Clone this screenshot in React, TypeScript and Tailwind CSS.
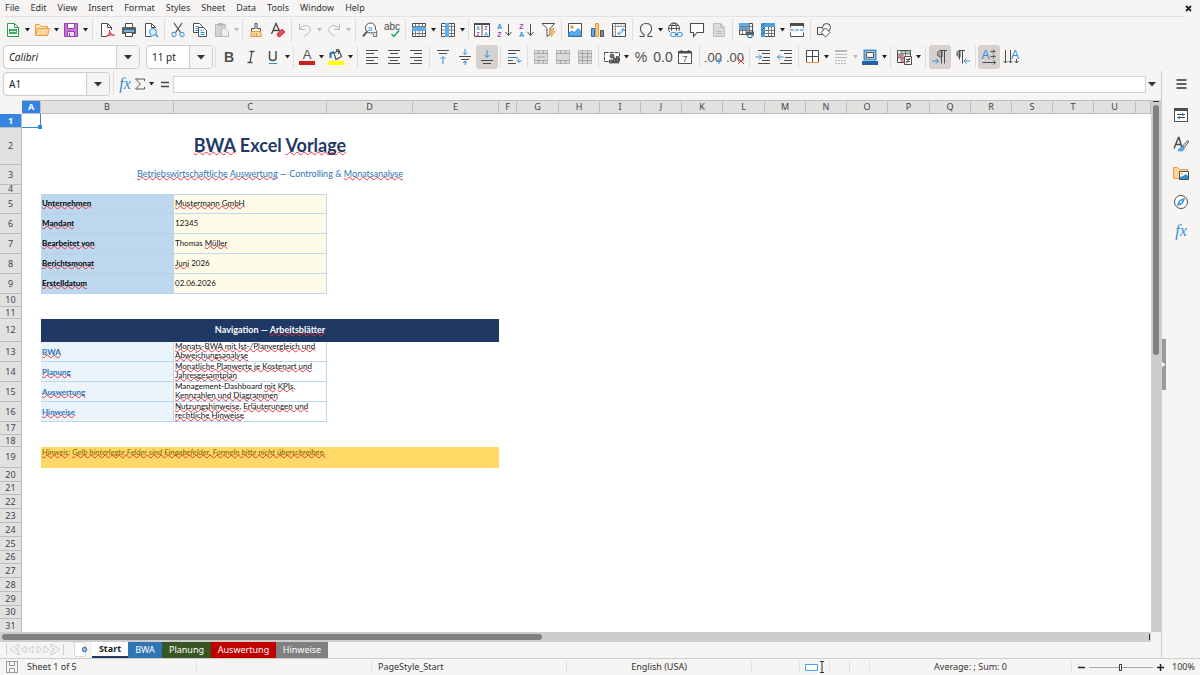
import { useState } from 'react';
import type { ReactNode } from 'react';
import clsx from 'clsx';

const INK = '#4d4d4d';
const GRID = '#7a7a7a';
const BLUE = '#2f8fd8';
const PURPLE = '#a03fb5';
const DIM = '#b9b9b7';
const ORANGE = '#ed9a3c';

/* ── Icon helpers ── */

function Svg({ children, dim }: { children: ReactNode; dim?: boolean }) {
    return (
        <svg
            width="16" height="16" viewBox="0 0 16 16" fill="none"
            stroke={dim ? DIM : INK} strokeWidth="1" aria-hidden="true"
            className="block shrink-0 overflow-visible"
        >
            {children}
        </svg>
    );
}

function Glyph({ x, y, size, fill = INK, bold, children }: { x: number; y: number; size: number; fill?: string; bold?: boolean; children: ReactNode }) {
    return (
        <text
            x={x} y={y} fontSize={size} fill={fill} stroke="none" textAnchor="middle"
            fontWeight={bold ? 700 : 400} fontFamily='"Liberation Sans", sans-serif'
        >
            {children}
        </text>
    );
}

const icons: Record<string, ReactNode> = {
    new: <Svg><path d="M2.5 1.5h7l4 4v9h-11z" fill="#fff" stroke="#2a9d55" /><path d="M9.5 1.5v4h4" stroke="#2a9d55" /><path d="M4 7h8v5H4z" fill="#3fae67" stroke="none" /><path d="M5 9.5h6" stroke="#d9f2e0" /></Svg>,
    open: <Svg><path d="M1.5 13.5v-11h4l2 2h6v2" fill="#fbe3bf" stroke={ORANGE} /><path d="M1.5 13.5l2-7h12l-2 7z" fill="#fcd59b" stroke={ORANGE} /></Svg>,
    save: <Svg><path d="M1.5 1.5h13v13h-13z" fill="#c579d3" stroke="#9b3fae" /><path d="M4.5 1.5h7v5h-7z" fill="#fff" stroke="#9b3fae" /><path d="M4.5 9.5h7v5h-7z" fill="#f2dcf5" stroke="#9b3fae" /><path d="M6.5 11v3" stroke="#9b3fae" /></Svg>,
    pdf: <Svg><path d="M12.5 8V5.5l-4-4h-6v13H8" fill="#fff" /><path d="M8.5 1.5v4h4" /><path d="M7 14.5c3-1 4-4 3.500-6.500 1 4 3 5.500 5 5.200-3-.9-6 0-8.500 1.300z" stroke="#d93644" fill="#f08b94" /></Svg>,
    print: <Svg><path d="M4.500 5V1.500h7V5" fill="#fff" /><rect x="1" y="5" width="14" height="7" rx="1" fill="#5a5f63" stroke="none" /><rect x="3" y="8" width="10" height="2" fill="#6db6ea" stroke="none" /><path d="M4.500 10.500h7v4h-7z" fill="#fff" /></Svg>,
    preview: <Svg><path d="M12.500 6V5.500l-4-4h-6v13h6" fill="#fff" /><path d="M8.500 1.500v4h4" /><circle cx="10" cy="10" r="3.500" stroke={BLUE} fill="#dcefff" /><path d="M12.500 12.500l2.500 2.500" stroke={BLUE} strokeWidth="1.500" /></Svg>,
    cut: <Svg><path d="M4 1l6.500 9.500M12 1L5.500 10.500" strokeWidth="1.200" /><circle cx="4" cy="12.500" r="2.200" stroke={BLUE} /><circle cx="12" cy="12.500" r="2.200" stroke={BLUE} /></Svg>,
    copy: <Svg><path d="M1.500 1.500h6l3 3v6h-9z" fill="#fff" /><path d="M3.500 4.500h3M3.500 6.500h3M3.500 8.500h3" stroke={BLUE} /><path d="M6.500 5.500h5l3 3v6h-8z" fill="#fff" /><path d="M8.500 8.500h2M8.500 10.500h4M8.500 12.500h4" stroke={BLUE} /></Svg>,
    paste: <Svg dim><path d="M1.500 2.500h10v12h-10z" fill="#d4d3d2" /><path d="M4 1h5v3H4z" fill={DIM} stroke="none" /><path d="M7.500 6.500h4l3 3v5h-7z" fill="#f0efee" /></Svg>,
    clone: <Svg><path d="M7 1.500h2v5h3.500v3h-9v-3H7z" fill="#f6f5f4" /><path d="M3.500 9.500h9l1 5h-11z" fill="#fbd7a4" stroke={ORANGE} /><path d="M6 11v3M8.500 11v3" stroke={ORANGE} /></Svg>,
    clear: <Svg><path d="M1.500 12L6 1.500 10 10M3 8.500h6" strokeWidth="1.400" /><path d="M7 12l5-5 3 3-5 4.500H8z" fill="#e0525d" stroke="#d93644" /></Svg>,
    undo: <Svg dim><path d="M2.500 2v5.500H8M2.500 7.500c3-5 9-5 10.500-1 1 3.500-2 5-6 8" /></Svg>,
    redo: <Svg dim><path d="M13.500 2v5.500H8M13.500 7.500c-3-5-9-5-10.500-1-1 3.500 2 5 6 8" /></Svg>,
    find: <Svg><circle cx="8.500" cy="6" r="5" fill="#fff" /><path d="M5 9.500L1 14.500" strokeWidth="2" /><Glyph x={8} y={8.500} size={8} fill={BLUE}>a</Glyph><path d="M11 8h5v8h-5z" fill="#f6f5f4" stroke="none" /><Glyph x={13} y={15} size={9}>d</Glyph></Svg>,
    spell: <Svg><Glyph x={8} y={8} size={10}>abc</Glyph><path d="M7.500 12l2.500 2.500 5-6" stroke="#18a558" strokeWidth="1.400" /></Svg>,
    row: <Svg><path d="M1.500 1.500h13v13h-13z" fill="#fff" /><path d="M4.500 2v12M8 2v12M11.500 2v12M2 11.500h12M2 4.500h12" stroke={GRID} /><path d="M1 5h14v4H1z" fill="#5cadea" stroke="none" /></Svg>,
    column: <Svg><path d="M1.500 1.500h13v13h-13z" fill="#fff" /><path d="M11.500 2v12M2 4.500h12M2 8h12M2 11.500h12" stroke={GRID} /><path d="M5 1h4v14H5z" fill="#5cadea" stroke="none" /></Svg>,
    sort: <Svg><path d="M.5 1.500h15v13H.5z" fill="#fff" /><path d="M0 2h16" strokeWidth="2" /><path d="M8 2v13" /><Glyph x={4} y={8} size={5} fill={BLUE} bold>A</Glyph><Glyph x={4} y={14} size={5} fill={PURPLE} bold>Z</Glyph><Glyph x={12} y={8} size={5} fill={PURPLE} bold>Z</Glyph><Glyph x={12} y={14} size={5} fill={BLUE} bold>A</Glyph></Svg>,
    asc: <Svg><Glyph x={3.5} y={6.5} size={7} fill={BLUE} bold>A</Glyph><Glyph x={3.5} y={15} size={7} fill={PURPLE} bold>Z</Glyph><path d="M12.500 2v11M9.500 10l3 3.500 3-3.500" /></Svg>,
    desc: <Svg><Glyph x={3.5} y={6.5} size={7} fill={PURPLE} bold>Z</Glyph><Glyph x={3.5} y={15} size={7} fill={BLUE} bold>A</Glyph><path d="M12.500 2v11M9.500 10l3 3.500 3-3.500" /></Svg>,
    filter: <Svg><path d="M2 1.500h12.500l-4.500 5v6l-3 2v-8z" fill="#fff" /><path d="M12 6.500L9.500 11H12l-1 4 4-5.500h-2.500L14 6.500z" fill="#fbc583" stroke={ORANGE} strokeWidth=".8" /></Svg>,
    image: <Svg><path d="M1.500 1.500h13v13h-13z" fill="#fff" /><circle cx="5" cy="5" r="1.700" fill={ORANGE} stroke="none" /><path d="M2 14v-3l3-2 2.500 1.500L11 6.500l3 3V14z" fill="#5cadea" stroke={BLUE} /></Svg>,
    chart: <Svg><path d="M2.500 6.500h3v8h-3z" fill="#5cadea" stroke="#1c6fb3" /><path d="M6.500 1.500h3v13h-3z" fill="#fbc583" stroke={ORANGE} /><path d="M11.500 8.500h3v6h-3z" fill="#8d8d8d" /></Svg>,
    pivot: <Svg><path d="M1.500 1.500h13v13h-13z" fill="#fff" /><path d="M2 4.500h12M4.500 2v12" stroke="#999" /><path d="M6 3h8M3 6v8" stroke="#aaa" strokeDasharray="2 1" /><path d="M7 11.500c4 0 5-1 5-4.500M10 9l2-2.500L14 9M9 9.500l-2 2 2 2" stroke={BLUE} /></Svg>,
    omega: <Svg><path d="M1.500 14.500h4.500v-2C3.500 11 2.500 9 2.500 6.500c0-3 2-5 5.500-5s5.500 2 5.500 5c0 2.500-1 4.500-3.500 6v2h4.500" strokeWidth="1.100" /></Svg>,
    link: <Svg><circle cx="7" cy="6.500" r="5.500" fill="#fff" /><ellipse cx="7" cy="6.500" rx="2.500" ry="5.500" /><path d="M1.500 6.500h11M2.500 3.500h9M2.500 9.500h4" /><path d="M3 9h13v7H3z" fill="#f6f5f4" stroke="none" /><rect x="3.500" y="10.500" width="6" height="4" rx="2" stroke={BLUE} /><rect x="9.500" y="10.500" width="6" height="4" rx="2" stroke={BLUE} /><path d="M7.500 12.500h4" stroke={BLUE} /></Svg>,
    comment: <Svg><path d="M1.500 1.500h13v9H8l-3.500 4v-4h-3z" fill="#fff" strokeWidth="1.100" /></Svg>,
    footer: <Svg dim><path d="M2.500 1.500h7l4 4v9h-11z" fill="#dddcdb" /><path d="M9.500 1.500v4h4" /><path d="M5 9.500h6M5 11.500h6" /></Svg>,
    printArea: <Svg><path d="M1.500 1.500h13v11h-13z" fill="#fff" /><path d="M1 1h10v7H1z" fill="#5cadea" stroke="none" /><path d="M4.500 4v8M8 4v8M11.500 2v10M2 4.500h12M2 8.500h12" stroke={GRID} /><path d="M8 9.500h8v4H8z" fill="#5a5f63" stroke="none" /><path d="M10 12.500h4v3h-4z" fill="#fff" stroke="#356fa5" /></Svg>,
    freeze: <Svg><path d="M1.500 1.500h13v13h-13z" fill="#fff" /><path d="M8.500 5v9M11.500 5v9M5 8.500h9M5 11.500h9" stroke={GRID} /><path d="M1 1h4v14H1zM1 1h14v4H1z" fill="#4aa1e3" stroke="none" /><path d="M1 5l4-4M1 9l4-4M1 13l4-4" stroke="#1c5f9a" /></Svg>,
    split: <Svg><path d="M1.500 5.500v-4h13v4M1.500 10.500v4h13v-4" fill="#fff" /><path d="M1 2.500h14" strokeWidth="3" /><path d="M1 8h14" stroke={BLUE} strokeDasharray="4 1" /></Svg>,
    shapes: <Svg><path d="M1.500 5.500h7v7h-7z" fill="#f6f5f4" /><circle cx="10.500" cy="5.500" r="4" fill="#f6f5f4" /><path d="M9.500 6l4.500 4.500-4.500 4.500L5 10.500z" fill="#fff" /></Svg>,
    bold: <Svg><Glyph x={8} y={13} size={14} bold>B</Glyph></Svg>,
    italic: <Svg><path d="M6.500 2.500h5M4.500 13.500h5M9 2.500l-2 11" strokeWidth="1.300" /></Svg>,
    underline: <Svg><path d="M4.500 2v6.500c0 4 6.500 4 6.500 0V2" strokeWidth="1.500" /><path d="M4 14.500h8" stroke={BLUE} /></Svg>,
    fontColor: <Svg><Glyph x={8} y={10} size={13}>A</Glyph><path d="M0 12h16v4H0z" fill="#c9211e" stroke="none" /></Svg>,
    highlight: <Svg><path d="M6 4l5-2.500 2.500 6L8 10.500z" fill="#fff" strokeWidth="1.200" /><path d="M8.500 3V.5h2V5" /><path d="M2.500 9V4.500L6 3" stroke="#1c6fb3" strokeWidth="2" /><path d="M0 12h16v4H0z" fill="#ff0" stroke="none" /></Svg>,
    left: <Svg><path d="M2 1.500h12M2 4.500h8M2 8.500h12M2 11.500h8M2 14.500h12" /></Svg>,
    center: <Svg><path d="M2 1.500h12M4 4.500h8M2 8.500h12M4 11.500h8M2 14.500h12" /></Svg>,
    right: <Svg><path d="M2 1.500h12M6 4.500h8M2 8.500h12M6 11.500h8M2 14.500h12" /></Svg>,
    top: <Svg><path d="M2 1.500h12M4 4.500h8" /><path d="M8 15V8M5.500 10L8 7.500l2.500 2.500" stroke={BLUE} /></Svg>,
    middle: <Svg><path d="M2 7.500h12M4 10.500h8" /><path d="M8 0v5.500M6 3.500l2 2 2-2M8 16v-4M6 14l2-2 2 2" stroke={BLUE} /></Svg>,
    bottom: <Svg><path d="M2 11.500h12M4 14.500h8" /><path d="M8 1v7M5.500 6L8 8.500 10.500 6" stroke={BLUE} /></Svg>,
    wrap: <Svg><path d="M2 1.500h12M2 4.500h8M2 11.500h5M2 14.500h8" /><path d="M2 8.500h8c2 0 3 1.500 3 4.500M10.500 11l2.500 2.500 2.500-2.500" stroke={BLUE} /></Svg>,
    merge: <Svg dim><path d="M1.500 1.500h13v13h-13z" fill="#dddcdb" /><path d="M1.500 4.500h13M1.500 11.500h13M5.500 1.500v3M10.500 1.500v3M5.500 11.500v3M10.500 11.500v3M4 8h8" stroke="#a3a3a1" /></Svg>,
    mergeCells: <Svg dim><path d="M1.500 1.500h13v13h-13z" fill="#dddcdb" /><path d="M1.500 4.500h13M1.500 11.500h13M5.500 1.500v3M10.500 1.500v3M5.500 11.500v3M10.500 11.500v3" stroke="#a3a3a1" /></Svg>,
    unmerge: <Svg dim><path d="M1.500 1.500h13v13h-13z" fill="#dddcdb" /><path d="M1.500 4.500h13M1.500 8h13M1.500 11.500h13M5.500 1.500v13M10.500 1.500v13" stroke="#a3a3a1" /></Svg>,
    currency: <Svg><path d="M.5 3.500h15v9H.5z" fill="#fff" strokeDasharray="4 1" /><circle cx="8" cy="7" r="2" fill="#777" /><path d="M5.500 11h3v3h-3zM9.500 9h2v5h-2zM12.500 7.500h2v6.500h-2z" fill="#777" /></Svg>,
    percent: <Svg><Glyph x={8} y={13} size={14}>%</Glyph></Svg>,
    number: <Svg><Glyph x={8} y={13} size={14}>0.0</Glyph></Svg>,
    date: <Svg><path d="M1.500 2.500h13v12h-13z" fill="#fff" /><path d="M1 3.500h14" strokeWidth="2" /><path d="M4.500 1v3M11.500 1v3" strokeWidth="1.500" /><Glyph x={8} y={13} size={9}>7</Glyph></Svg>,
    addDec: <Svg><Glyph x={7} y={13} size={13}>.00</Glyph><path d="M13 9v6M10 12h6" stroke={BLUE} /></Svg>,
    delDec: <Svg><Glyph x={7} y={13} size={13}>.00</Glyph><path d="M10 9l6 6M16 9l-6 6" stroke="#e0393e" /></Svg>,
    indent: <Svg><path d="M3 1.500h12M7 4.500h8M8 8.500h7M7 11.500h8M3 14.500h12" /><path d="M.5 8h6M4 5.500L6.500 8 4 10.500" stroke={BLUE} /></Svg>,
    outdent: <Svg><path d="M3 1.500h12M7 4.500h8M8 8.500h7M7 11.500h8M3 14.500h12" /><path d="M.5 8h6M3 5.500L.5 8 3 10.500" stroke={BLUE} /></Svg>,
    borders: <Svg><path d="M2.500 1.500h12v12h-12zM8.500 1.500v12M2.500 7.500h12" fill="#fff" /><path d="M2 13.500h13" stroke={ORANGE} /></Svg>,
    lineStyle: <Svg dim><path d="M2 2h12" strokeWidth="2" /><path d="M2 5.500h12M2 8.500h12" /><path d="M2 11.500h12M2 14.500h12" strokeDasharray="2 1" /></Svg>,
    borderColor: <Svg><path d="M2.500 1.500h11v9h-11z" fill="#fff" stroke="#4a90cf" strokeWidth="2" /><path d="M4.500 3.500h7v5h-7z" fill="#f6f5f4" /><path d="M0 12h16v4H0z" fill="#2360a0" stroke="none" /></Svg>,
    conditional: <Svg><path d="M1.500 1.500h13v12h-13z" fill="#fff" /><path d="M5 2h9v3H5z" fill="#8fd3a6" stroke="none" /><path d="M2 5h6v4H2zM5 9h4v4H5z" fill="#f08b94" stroke="none" /><path d="M5 2v11M9.500 2v5M2 5h12M2 9h6" stroke={GRID} /><path d="M8.500 7.500h7v8h-7z" fill="#fff" /><path d="M10 10.500h4M10 12.500h4M13.500 9l-3 5.500" /></Svg>,
    ltr: <Svg><path d="M10 1.500H8.500c-4 0-4 6.500 0 6.500H10z" fill="#aaa" /><path d="M9.500 1.500v13M12.500 1.500v13M15 1.500H8.500" /><path d="M.5 12h6M4 9.500L6.500 12 4 14.500" stroke={BLUE} /></Svg>,
    rtl: <Svg><path d="M6 1.500h-.5C2 1.500 2 8 5.500 8H6z" fill="#aaa" /><path d="M5.500 1.500v9M8.500 1.500v13M11 1.500H5.500" /><path d="M10 12h6M12.500 9.500L10 12l2.500 2.500" stroke={BLUE} /></Svg>,
    textLtr: <Svg><Glyph x={4.5} y={9.5} size={12} fill={BLUE}>A</Glyph><path d="M9.500 2.500h4M9.500 7.500h4M1.500 13.500h13M12 .5l2 2-2 2M12 5.500l2 2-2 2M12.500 11.500l2 2-2 2" /></Svg>,
    textTtb: <Svg><path d="M2.500 1v13M.5 12l2 2 2-2M7.500 1v13M5.500 12l2 2 2-2M13.500 10v4M11.500 12l2 2 2-2" /><Glyph x={12} y={9.5} size={12} fill={BLUE}>A</Glyph></Svg>,
    fx: <Svg><text x="8" y="12.500" fontSize="16" fontStyle="italic" fill={BLUE} stroke="none" textAnchor="middle" fontFamily='"Liberation Serif", serif'>fx</text></Svg>,
    menu: <Svg><path d="M3.500 4h10M3.500 8h10M3.500 12h10" stroke="#333" strokeWidth="1.500" /></Svg>,
    properties: <Svg><path d="M1.500 2.500h13v12h-13z" fill="#fff" /><path d="M1 2.500h14" strokeWidth="3" /><path d="M4 7.500h8M4 10.500h8" /><path d="M9 6l2 1.500L9 9M7 9l-2 1.500L7 12" stroke={BLUE} /></Svg>,
    styles: <Svg><path d="M1 12.500L5.500 1.500h.5L9 12M2.500 8.500h5" strokeWidth="1.500" /><path d="M15 4.500L9.500 10l1.500 1.500L15.500 6z" fill="#fff" /><path d="M9.500 10.500c-2 0-1.500 3-4.500 3.500 3 2 7 .5 6-2.500z" fill="#5cadea" stroke={BLUE} /></Svg>,
    gallery: <Svg><path d="M.5 13.500v-11h4l2 2h8v9z" fill="#fcd59b" stroke={ORANGE} /><path d="M6.500 6.500h9v8h-9z" fill="#fff" /><circle cx="9" cy="9" r="1" fill={ORANGE} stroke="none" /><path d="M7 14v-2l3-1 3-2 2 2v3z" fill={BLUE} stroke="none" /></Svg>,
    navigator: <Svg><circle cx="8" cy="8" r="6.500" fill="#fff" /><path d="M11.500 4.500L9.500 9.500 4.500 11.500l2-5z" fill="#5cadea" stroke={BLUE} /><circle cx="8" cy="8" r="1" fill="#fff" stroke="none" /></Svg>,
};

/* ── Toolbar pieces ── */

function Arrow({ dim }: { dim?: boolean }) {
    return (
        <svg width="7" height="4" viewBox="0 0 7 4" aria-hidden="true" className="block">
            <path d="M1 0h5L3.500 3.500z" fill={dim ? '#b9b9b7' : '#222'} />
        </svg>
    );
}

type Tool = { id: string; menu?: boolean; dim?: boolean; on?: boolean; gap?: boolean };

function ToolGroup({ tools }: { tools: Tool[] }) {
    return (
        <>
            {tools.map((t, i) =>
                t.id === '|' ? (
                    <span key={i} className={clsx('flex h-[22px] shrink-0 justify-center', t.gap ? 'w-[7px]' : 'w-[5px]')}>
                        <span className="w-px bg-[#e0dedc]" />
                    </span>
                ) : (
                    <span key={i} className="flex shrink-0 items-center">
                        <button
                            aria-label={t.id} aria-pressed={t.on}
                            className={clsx('flex h-6 w-[22px] items-center justify-center rounded-[3px]', t.on && 'bg-[#d5d1ce]')}
                        >
                            {icons[t.id]}
                        </button>
                        {t.menu && <button aria-label={`${t.id} options`} className="flex h-6 w-[7px] items-center"><Arrow dim={t.dim} /></button>}
                    </span>
                )
            )}
        </>
    );
}

const standardTools: Tool[] = [
    { id: 'new', menu: true }, { id: 'open', menu: true }, { id: 'save', menu: true }, { id: '|', gap: true },
    { id: 'pdf' }, { id: 'print' }, { id: 'preview' }, { id: '|' },
    { id: 'cut' }, { id: 'copy' }, { id: 'paste', menu: true, dim: true }, { id: '|' },
    { id: 'clone' }, { id: 'clear' }, { id: '|' },
    { id: 'undo', menu: true, dim: true }, { id: 'redo', menu: true, dim: true }, { id: '|', gap: true },
    { id: 'find' }, { id: 'spell' }, { id: '|' },
    { id: 'row', menu: true }, { id: 'column', menu: true }, { id: '|' },
    { id: 'sort' }, { id: 'asc' }, { id: 'desc' }, { id: 'filter' }, { id: '|' },
    { id: 'image' }, { id: 'chart' }, { id: 'pivot' }, { id: '|' },
    { id: 'omega', menu: true }, { id: 'link' }, { id: 'comment' }, { id: 'footer' }, { id: '|' },
    { id: 'printArea' }, { id: 'freeze', menu: true }, { id: 'split' }, { id: '|' },
    { id: 'shapes' },
];

const formatTools: Tool[] = [
    { id: '|' },
    { id: 'bold' }, { id: 'italic' }, { id: 'underline', menu: true }, { id: '|' },
    { id: 'fontColor', menu: true }, { id: 'highlight', menu: true }, { id: '|', gap: true },
    { id: 'left' }, { id: 'center' }, { id: 'right' }, { id: '|' },
    { id: 'top' }, { id: 'middle' }, { id: 'bottom', on: true }, { id: '|' },
    { id: 'wrap' }, { id: '|' },
    { id: 'merge' }, { id: 'mergeCells' }, { id: 'unmerge' }, { id: '|' },
    { id: 'currency', menu: true }, { id: 'percent' }, { id: 'number' }, { id: 'date' }, { id: '|', gap: true },
    { id: 'addDec' }, { id: 'delDec' }, { id: '|' },
    { id: 'indent' }, { id: 'outdent' }, { id: '|' },
    { id: 'borders', menu: true }, { id: 'lineStyle', menu: true, dim: true }, { id: 'borderColor', menu: true }, { id: '|' },
    { id: 'conditional', menu: true }, { id: '|', gap: true },
    { id: 'ltr', on: true }, { id: 'rtl' }, { id: '|' },
    { id: 'textLtr', on: true }, { id: 'textTtb' },
];

function Combo({ label, value, className, italic }: { label: string; value: string; className: string; italic?: boolean }) {
    return (
        <div className={clsx('flex h-6 shrink-0 overflow-hidden rounded border border-[#cfcbc8] bg-white', className)}>
            <input aria-label={label} defaultValue={value} className={clsx('min-w-0 flex-1 px-[5px] text-[10px] text-[#222] outline-none', italic && 'italic')} />
            <button aria-label={`${label} list`} className="flex w-[23px] items-center justify-center border-l border-[#cfcbc8] bg-[#f6f5f4]">
                <svg width="8" height="5" viewBox="0 0 8 5" aria-hidden="true"><path d="M0 0h8L4 4.500z" fill="#333" /></svg>
            </button>
        </div>
    );
}

/* ── Sheet ── */

const columns = [
    { name: 'A', w: 'w-[19px]' }, { name: 'B', w: 'w-[133px]' }, { name: 'C', w: 'w-[153px]' },
    { name: 'D', w: 'w-[86px]' }, { name: 'E', w: 'w-[86px]' }, { name: 'F', w: 'w-[18px]' },
    { name: 'G', w: 'w-[42px]' }, { name: 'H', w: 'w-[41px]' }, { name: 'I', w: 'w-[41px]' },
    { name: 'J', w: 'w-[41px]' }, { name: 'K', w: 'w-[41px]' }, { name: 'L', w: 'w-[42px]' },
    { name: 'M', w: 'w-[41px]' }, { name: 'N', w: 'w-[41px]' }, { name: 'O', w: 'w-[41px]' },
    { name: 'P', w: 'w-[42px]' }, { name: 'Q', w: 'w-[41px]' }, { name: 'R', w: 'w-[41px]' },
    { name: 'S', w: 'w-[41px]' }, { name: 'T', w: 'w-[41px]' }, { name: 'U', w: 'w-[42px]' },
    { name: '', w: '' },
];

const heights = [
    'h-[14px]', 'h-[37px]', 'h-[20px]', 'h-[9px]',
    'h-[20px]', 'h-[20px]', 'h-[20px]', 'h-[20px]', 'h-[20px]',
    'h-[13px]', 'h-[12px]', 'h-[23px]',
    'h-[20px]', 'h-[20px]', 'h-[20px]', 'h-[20px]',
    'h-[13px]', 'h-[12px]', 'h-[21px]', 'h-[14px]', 'h-[13px]',
    'h-[14px]', 'h-[14px]', 'h-[14px]', 'h-[14px]', 'h-[13px]',
    'h-[14px]', 'h-[14px]', 'h-[14px]', 'h-[13px]', 'h-[14px]',
];

// misspelled word, red wave below
function W({ children }: { children: ReactNode }) {
    return (
        <span className="underline decoration-[#e8323c] decoration-wavy decoration-1 -underline-offset-1 [text-decoration-skip-ink:none]">
            {children}
        </span>
    );
}

const company: Record<number, [string, ReactNode]> = {
    5: ['Unternehmen', <W>Mustermann GmbH</W>],
    6: ['Mandant', '12345'],
    7: ['Bearbeitet von', <>Thomas <W>Müller</W></>],
    8: ['Berichtsmonat', <><W>Juni</W> 2026</>],
    9: ['Erstelldatum', '02.06.2026'],
};

const sheets: Record<number, [string, ReactNode]> = {
    13: ['BWA', <><W>Monats-BWA mit Ist-/Planvergleich und</W><br /><W>Abweichungsanalyse</W></>],
    14: ['Planung', <><W>Monatliche Planwerte je Kostenart und</W><br /><W>Jahresgesamtplan</W></>],
    15: ['Auswertung', <>Management-Dashboard <W>mit</W> <W>KPIs</W>,<br /><W>Kennzahlen und Diagrammen</W></>],
    16: ['Hinweise', <><W>Nutzungshinweise</W>, <W>Erläuterungen und</W><br /><W>rechtliche Hinweise</W></>],
};

function RowCells({ n }: { n: number }) {
    if (n === 1) {
        return (
            <td className="relative border-r border-b border-[#3584e4]">
                <span className="absolute -right-[2px] -bottom-[2px] size-1 bg-[#3584e4]" />
            </td>
        );
    }
    if (n === 2) {
        return <><td /><td colSpan={4} className="pb-1 text-center text-[18px] leading-6 font-bold text-[#1f3864]"><W>BWA</W> Excel <W>Vorlage</W></td></>;
    }
    if (n === 3) {
        return <><td /><td colSpan={4} className="pb-[2px] text-center text-[9px] leading-3 text-[#2e75b6]"><W>Betriebswirtschaftliche</W> <W>Auswertung</W> — Controlling &amp; <W>Monatsanalyse</W></td></>;
    }
    if (n === 12) {
        return <><td /><td colSpan={4} className="bg-[#1f3864] pb-[2px] text-center text-[9px] leading-3 font-bold text-white">Navigation — <W>Arbeitsblätter</W></td></>;
    }
    if (n === 19) {
        return <><td /><td colSpan={4} className="bg-[#ffd966] px-px align-top text-[#7f6000] italic"><W>Hinweis</W>: <W>Gelb hinterlegte Felder sind Eingabefelder. Formeln bitte nicht überschreiben.</W></td></>;
    }
    if (company[n]) {
        const [label, value] = company[n];
        return (
            <>
                <td />
                <th scope="row" className="border-b border-[#b6d1e9] bg-[#bdd7ee] px-px pb-[2px] text-left font-bold text-black"><W>{label}</W></th>
                <td className={clsx('border-r border-b border-[#bdd7ee] bg-[#fffbe9] px-px pb-[2px] text-[#111]', n === 5 && 'border-t')}>{value}</td>
            </>
        );
    }
    if (sheets[n]) {
        const [label, value] = sheets[n];
        return (
            <>
                <td />
                <td className="border-r border-b border-[#bdd7ee] bg-[#ebf3fb] px-px font-bold text-[#2e75b6]"><a href="#sheet"><W>{label}</W></a></td>
                <td className="border-r border-b border-[#bdd7ee] px-px align-top leading-[9px] whitespace-nowrap text-[#111]">{value}</td>
            </>
        );
    }
    return null;
}

function Sheet() {
    return (
        <table className="w-full table-fixed border-separate border-spacing-0 bg-white font-[Lato,sans-serif] text-[8px] leading-[10px]">
            <thead>
                <tr className="font-['Noto_Sans',sans-serif] text-[9px] leading-3 text-[#444]">
                    <th className="h-[14px] w-[22px] bg-[#f6f5f4]" />
                    {columns.map((c) => (
                        <th
                            key={c.name} scope="col"
                            className={clsx(
                                'border-t border-r border-b border-[#bdbdbd] p-0 text-center', c.w,
                                c.name === 'A' ? 'bg-[#3584e4] font-bold text-white' : 'bg-[#e1e1e0] font-normal'
                            )}
                        >
                            {c.name}
                        </th>
                    ))}
                </tr>
            </thead>
            <tbody>
                {heights.map((h, i) => (
                    <tr key={i} className={h}>
                        <th
                            scope="row"
                            className={clsx(
                                "border-r border-b border-[#bdbdbd] p-0 text-center font-['Noto_Sans',sans-serif] text-[9px] leading-[8px]",
                                i === 0 ? 'bg-[#3584e4] font-bold text-white' : 'bg-[#e1e1e0] font-normal text-[#444]'
                            )}
                        >
                            {i + 1}
                        </th>
                        <RowCells n={i + 1} />
                    </tr>
                ))}
            </tbody>
        </table>
    );
}

const tabs = [
    { name: 'Start', cls: 'w-9 bg-white border-b-2 border-[#1f3864] font-bold text-[#222]' },
    { name: 'BWA', cls: 'w-[34px] bg-[#2e75b6] text-white' },
    { name: 'Planung', cls: 'w-[49px] bg-[#375623] text-white' },
    { name: 'Auswertung', cls: 'w-[65px] bg-[#c00000] text-white' },
    { name: 'Hinweise', cls: 'w-[52px] bg-[#808080] text-white' },
];

const navArrows = [
    { label: 'First sheet', d: 'M1.500 1v11M14 1L5 6.500l9 5.500V8.500L10.500 6.500 14 4.500z' },
    { label: 'Previous sheet', d: 'M6 3L1 6.500 6 10zM13 3L8 6.500l5 3.500z' },
    { label: 'Next sheet', d: 'M2 3l5 3.500L2 10zM9 3l5 3.500L9 10z' },
    { label: 'Last sheet', d: 'M13.500 1v11M1 1l9 5.500L1 12V8.500l3.500-2L1 4.500z' },
];

const menus = ['File', 'Edit', 'View', 'Insert', 'Format', 'Styles', 'Sheet', 'Data', 'Tools', 'Window', 'Help'];
const deck = ['properties', 'styles', 'gallery', 'navigator', 'fx'];

export default function App() {
    const [zoom, setZoom] = useState(49);

    return (
        <div className="flex h-screen flex-col overflow-hidden bg-[#f6f5f4] font-['Noto_Sans',sans-serif] text-[9px] text-[#333]">

            {/* Menu bar */}
            <div className="flex h-[17px] shrink-0 items-center pr-4 pl-[5px]">
                <nav className="flex h-full flex-1 items-center gap-[11px] border-b border-[#e3e1df]">
                    {menus.map((m) => <button key={m} className="leading-4">{m}</button>)}
                </nav>
                <button aria-label="Close" className="-mr-2">
                    <svg width="7" height="7" viewBox="0 0 7 7" aria-hidden="true"><path d="M1 1l5 5M6 1L1 6" stroke="#222" strokeWidth="1.800" /></svg>
                </button>
            </div>

            {/* Standard toolbar */}
            <div className="flex h-[26px] shrink-0 items-center pl-[2px]">
                <ToolGroup tools={standardTools} />
            </div>

            {/* Formatting toolbar */}
            <div className="flex h-7 shrink-0 items-center pl-[3px]">
                <Combo label="Font name" value="Calibri" italic className="mr-[6px] w-[137px]" />
                <Combo label="Font size" value="11 pt" className="w-[67px]" />
                <ToolGroup tools={formatTools} />
            </div>

            <div className="flex min-h-0 flex-1">
                <div className="flex min-w-0 flex-1 flex-col">

                    {/* Formula bar */}
                    <div className="flex h-[29px] shrink-0 items-center pb-[3px] pl-[3px]">
                        <Combo label="Name box" value="A1" className="w-[107px]" />
                        <ToolGroup tools={[{ id: '|', gap: true }]} />
                        <button aria-label="Function wizard" className="w-4">{icons.fx}</button>
                        <button aria-label="Select function" className="flex w-6 items-center gap-[2px] pl-px">
                            <svg width="12" height="12" viewBox="0 0 12 12" aria-hidden="true" className="shrink-0"><path d="M10.500 3V1h-9l5 5-5 5h9V9" fill="none" stroke="#555" /></svg>
                            <Arrow />
                        </button>
                        <button aria-label="Formula" className="ml-1 w-3">
                            <svg width="8" height="7" viewBox="0 0 8 7" aria-hidden="true"><path d="M0 1.500h8M0 5.500h8" stroke="#444" strokeWidth="1.500" /></svg>
                        </button>
                        <input aria-label="Input line" className="h-[17px] min-w-0 flex-1 border border-[#d5d2cf] bg-white px-1 outline-none" />
                        <button aria-label="Expand formula bar" className="flex w-[15px] items-center pl-[2px]">
                            <svg width="8" height="5" viewBox="0 0 8 5" aria-hidden="true"><path d="M0 0h8L4 4.500z" fill="#333" /></svg>
                        </button>
                    </div>

                    <div className="flex min-h-0 flex-1">
                        <div className="flex min-w-0 flex-1 flex-col">
                            <div className="min-h-0 flex-1 overflow-hidden bg-white"><Sheet /></div>
                            {/* Horizontal scroll bar */}
                            <div className="flex h-[10px] shrink-0 items-center justify-between bg-[#cdcdcd] pl-[2px]">
                                <span className="h-[6px] w-[47%] rounded-full bg-[#808280]" />
                                <span className="mr-px h-[6px] w-px bg-[#333]" />
                            </div>
                        </div>
                        {/* Vertical scroll bar */}
                        <div className="mb-[10px] flex w-[10px] shrink-0 flex-col items-center bg-[#cdcdcd]">
                            <span className="mt-px mb-[3px] h-px w-[6px] shrink-0 bg-[#333]" />
                            <span className="h-[47%] w-[6px] rounded-full bg-[#808280]" />
                        </div>
                    </div>

                    {/* Sheet tabs */}
                    <div className="flex h-4 shrink-0 items-start pl-[5px]">
                        <div className="flex">
                            {navArrows.map((a) => (
                                <button key={a.label} aria-label={a.label}>
                                    <svg width="15" height="15" viewBox="0 0 15 13" fill="none" stroke="#cfcecc" aria-hidden="true"><path d={a.d} /></svg>
                                </button>
                            ))}
                        </div>
                        <button aria-label="Add sheet" className="mr-[3px] ml-[9px]">
                            <svg width="15" height="15" viewBox="0 0 15 15" fill="none" aria-hidden="true">
                                <path d="M.5 0h8l3 3v11.500H.5z" fill="#fff" stroke="#dcdad8" />
                                <circle cx="10.500" cy="7.500" r="2.200" fill="#9cc4ea" stroke="#2360a0" />
                            </svg>
                        </button>
                        {tabs.map((t) => <button key={t.name} className={clsx('h-4 leading-[14px]', t.cls)}>{t.name}</button>)}
                    </div>
                </div>

                {/* Sidebar */}
                <div className="flex w-[39px] shrink-0 border-l border-[#d0cecc]">
                    <button aria-label="Hide sidebar" className="flex h-[51px] w-1 items-center self-center bg-[#999]">
                        <svg width="4" height="5" viewBox="0 0 4 5" aria-hidden="true"><path d="M0 0l3.500 2.500L0 5z" fill="#fff" /></svg>
                    </button>
                    <div className="flex flex-1 flex-col items-center gap-[13px] pt-[5px] pr-1">
                        <button aria-label="Sidebar settings" className="mb-[2px]">{icons.menu}</button>
                        {deck.map((d) => <button key={d} aria-label={d}>{icons[d]}</button>)}
                    </div>
                </div>
            </div>

            {/* Status bar */}
            <div className="flex h-[17px] shrink-0 items-center border-t border-[#cfcdcb] pr-[5px] pl-[6px] leading-3">
                <svg width="12" height="12" viewBox="0 0 12 12" fill="none" stroke="#999" aria-hidden="true"><path d="M.5.5h11v11H.5zM3.500.5v4h5v-4M3.500 11.500v-4h5v4" /></svg>
                <span className="w-[179px] border-r border-[#e3e1df] pl-[9px]">Sheet 1 of 5</span>
                <span className="h-3 w-[175px] border-r border-[#e3e1df]" />
                <span className="w-[195px] border-r border-[#e3e1df] pl-[6px]">PageStyle_Start</span>
                <span className="flex-1 border-r border-[#e3e1df] text-center">English (USA)</span>
                <span className="h-3 w-12 border-r border-[#e3e1df]" />
                <span className="flex h-3 w-[30px] items-center justify-center border-r border-[#e3e1df]">
                    <svg width="22" height="12" viewBox="0 0 22 12" fill="none" aria-hidden="true">
                        <path d="M1.500 3.500h12v6h-12z" fill="#fff" stroke="#4aa1e3" /><path d="M16 .5h4M16 11.500h4M18 1v10" stroke="#333" />
                    </svg>
                </span>
                <span className="h-3 w-5 border-r border-[#e3e1df]" />
                <span className="h-3 w-5 border-r border-[#e3e1df]" />
                <span className="w-[202px] border-r border-[#e3e1df] text-center">Average: ; Sum: 0</span>
                <button aria-label="Zoom out" className="ml-[6px]">
                    <svg width="7" height="7" viewBox="0 0 7 7" aria-hidden="true"><path d="M0 3.500h7" stroke="#222" strokeWidth="1.500" /></svg>
                </button>
                <input
                    type="range" aria-label="Zoom" value={zoom} onChange={(e) => setZoom(Number(e.target.value))}
                    className="mx-1 h-2 w-[64px] appearance-none bg-[linear-gradient(#aaa,#aaa)] bg-[length:100%_1px] bg-center bg-no-repeat [&::-webkit-slider-thumb]:h-[7px] [&::-webkit-slider-thumb]:w-[3px] [&::-webkit-slider-thumb]:appearance-none [&::-webkit-slider-thumb]:border [&::-webkit-slider-thumb]:border-[#444] [&::-webkit-slider-thumb]:bg-white"
                />
                <button aria-label="Zoom in">
                    <svg width="7" height="7" viewBox="0 0 7 7" aria-hidden="true"><path d="M0 3.500h7M3.500 0v7" stroke="#222" strokeWidth="1.500" /></svg>
                </button>
                <span className="ml-2">100%</span>
            </div>
        </div>
    );
}
